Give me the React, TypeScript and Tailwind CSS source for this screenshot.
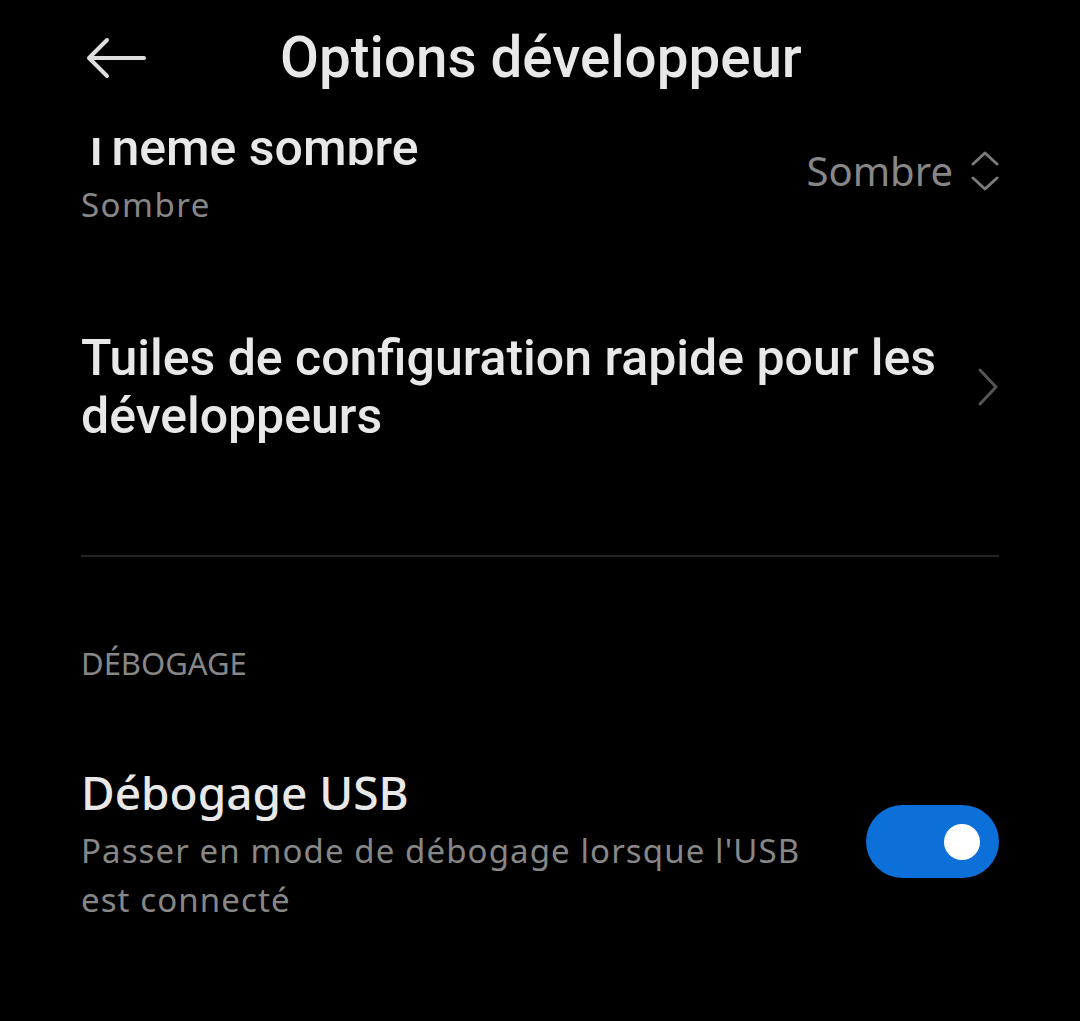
const roboto = { fontFamily: 'Roboto, "Noto Sans", sans-serif' }
const noto = { fontFamily: '"Noto Sans", Roboto, sans-serif' }

function Interrupteur({ actif }: { actif: boolean }) {
  return (
    <div
      className={`flex h-[73px] w-[133px] shrink-0 items-center rounded-full px-[19px] ${
        actif ? 'justify-end bg-[#0d6fd8]' : 'justify-start bg-[#3a3a3a]'
      }`}
    >
      <div className="h-[36px] w-[36px] rounded-full bg-white" />
    </div>
  )
}

function FlechesHautBas() {
  return (
    <svg width="28" height="42" viewBox="0 0 28 42" fill="none" stroke="#7a7a7a" strokeWidth="3" strokeLinecap="round" strokeLinejoin="round">
      <path d="M2 14 L14 3 L26 14" />
      <path d="M2 28 L14 39 L26 28" />
    </svg>
  )
}

function Chevron() {
  return (
    <svg width="22" height="40" viewBox="0 0 22 40" fill="none" stroke="#565656" strokeWidth="3" strokeLinecap="round" strokeLinejoin="round">
      <path d="M3 3 L19 20 L3 37" />
    </svg>
  )
}

export default function App() {
  return (
    <div className="flex h-[1021px] w-[1080px] flex-col overflow-hidden bg-black text-[#e8e8e8]" style={roboto}>
      <header className="relative z-10 flex h-[138px] shrink-0 items-start bg-black pl-[86px] pt-[20px]">
        <svg width="62" height="42" viewBox="0 0 62 42" fill="none" stroke="#dedede" strokeWidth="4" strokeLinecap="round" strokeLinejoin="round" className="mt-[17px]">
          <path d="M4 21 H58" />
          <path d="M21 3 L3 21 L21 39" />
        </svg>
        <h1 className="ml-[132px] text-[56.5px] font-medium leading-[76px]">Options développeur</h1>
      </header>

      <div className="relative flex-1 overflow-hidden">
        <div className="-mt-[18px] px-[81px]">
          <div className="flex items-start justify-between">
            <div>
              <div className="text-[50px] font-medium leading-[56px]">Thème sombre</div>
              <div className="mt-[9px] text-[33px] leading-[40px] tracking-[1.5px] text-[#878787]" style={noto}>Sombre</div>
            </div>
            <div className="mt-[26px] flex items-center gap-[18px]">
              <span className="text-[40px] leading-[50px] text-[#878787]" style={noto}>Sombre</span>
              <FlechesHautBas />
            </div>
          </div>

          <div className="mt-[104px] flex items-center justify-between">
            <div className="w-[870px] text-[50px] font-medium leading-[58px]">
              Tuiles de configuration rapide pour les développeurs
            </div>
            <Chevron />
          </div>

          <div className="mt-[110px] h-[2px] bg-[#262626]" />

          <div className="mt-[86px] text-[31px] leading-[40px] text-[#878787]" style={noto}>DÉBOGAGE</div>

          <div className="mt-[81px] flex items-start justify-between">
            <div>
              <div className="text-[46px] font-medium leading-[56px]" style={noto}>Débogage USB</div>
              <div className="mt-[6px] w-[760px] text-[33px] leading-[49px] tracking-[1.1px] text-[#878787]" style={noto}>
                Passer en mode de débogage lorsque l'USB est connecté
              </div>
            </div>
            <div className="mt-[41px]">
              <Interrupteur actif />
            </div>
          </div>
        </div>
      </div>
    </div>
  )
}
